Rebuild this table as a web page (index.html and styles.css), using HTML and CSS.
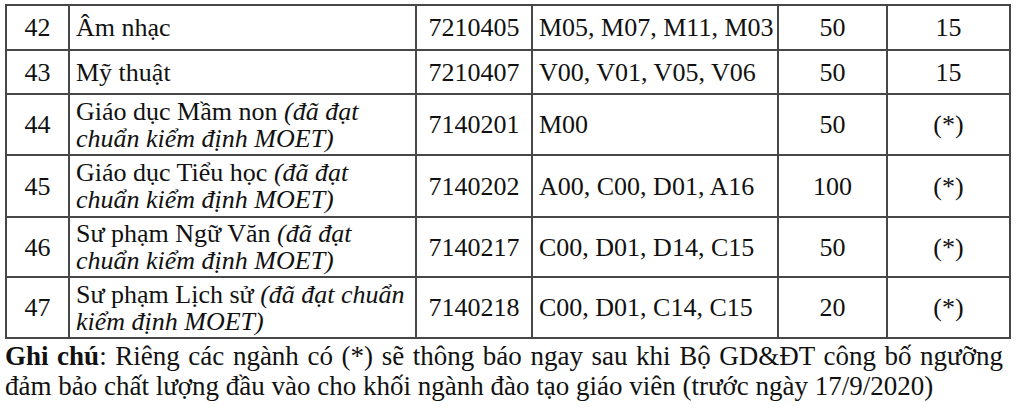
FILE: index.html
```html
<!DOCTYPE html>
<html>
<head>
<meta charset="utf-8">
<link rel="stylesheet" href="styles.css">
</head>
<body class="doc">
  <table class="majors">
    <colgroup>
      <col class="c-no">
      <col class="c-name">
      <col class="c-code">
      <col class="c-combo">
      <col class="c-quota">
      <col class="c-min">
    </colgroup>
    <tbody>
      <tr class="r-a">
        <td class="center">42</td>
        <td class="name">Âm nhạc</td>
        <td class="center">7210405</td>
        <td class="combo">M05, M07, M11, M03</td>
        <td class="center">50</td>
        <td class="center">15</td>
      </tr>
      <tr class="r-b">
        <td class="center">43</td>
        <td class="name">Mỹ thuật</td>
        <td class="center">7210407</td>
        <td class="combo">V00, V01, V05, V06</td>
        <td class="center">50</td>
        <td class="center">15</td>
      </tr>
      <tr class="r-c">
        <td class="center">44</td>
        <td class="name">Giáo dục Mầm non <em>(đã đạt<br>chuẩn kiểm định MOET)</em></td>
        <td class="center">7140201</td>
        <td class="combo">M00</td>
        <td class="center">50</td>
        <td class="center">(*)</td>
      </tr>
      <tr class="r-d">
        <td class="center">45</td>
        <td class="name">Giáo dục Tiểu học <em>(đã đạt<br>chuẩn kiểm định MOET)</em></td>
        <td class="center">7140202</td>
        <td class="combo">A00, C00, D01, A16</td>
        <td class="center">100</td>
        <td class="center">(*)</td>
      </tr>
      <tr class="r-e">
        <td class="center">46</td>
        <td class="name">Sư phạm Ngữ Văn <em>(đã đạt<br>chuẩn kiểm định MOET)</em></td>
        <td class="center">7140217</td>
        <td class="combo">C00, D01, D14, C15</td>
        <td class="center">50</td>
        <td class="center">(*)</td>
      </tr>
      <tr class="r-f">
        <td class="center">47</td>
        <td class="name">Sư phạm Lịch sử <em>(đã đạt chuẩn<br>kiểm định MOET)</em></td>
        <td class="center">7140218</td>
        <td class="combo">C00, D01, C14, C15</td>
        <td class="center">20</td>
        <td class="center">(*)</td>
      </tr>
    </tbody>
  </table>
  <p class="note"><strong>Ghi chú</strong>: Riêng các ngành có (*) sẽ thông báo ngay sau khi Bộ GD&amp;ĐT công bố ngưỡng đảm bảo chất lượng đầu vào cho khối ngành đào tạo giáo viên (trước ngày 17/9/2020)</p>
</body>
</html>
```

FILE: styles.css
```css
.doc {
  margin: 0;
  padding: 4px 0 0 5px;
  background: #ffffff;
  color: #111111;
  font-family: "Liberation Serif", "Times New Roman", serif;
  font-size: 26px;
}

.majors {
  border-collapse: collapse;
  table-layout: fixed;
  width: 1004px;
  font-family: "Liberation Serif", "Times New Roman", serif;
  font-size: 26px;
}

.c-no { width: 63px; }
.c-name { width: 347px; }
.c-code { width: 116px; }
.c-combo { width: 246px; }
.c-quota { width: 109px; }
.c-min { width: 123px; }

.majors td {
  border: 2px solid #474747;
  padding: 0 6px;
  line-height: 27px;
  vertical-align: middle;
  white-space: nowrap;
}

.center { text-align: center; }
.name { padding-left: 7px; }
.combo { padding-left: 5px; }

.r-a { height: 45px; }
.r-b { height: 44px; }
.r-c { height: 61px; }
.r-d { height: 62px; }
.r-e { height: 60px; }
.r-f { height: 61px; }

.note {
  width: 998px;
  margin: 2px 0 0 0;
  font-size: 27px;
  line-height: 30px;
  text-align: justify;
}
```
